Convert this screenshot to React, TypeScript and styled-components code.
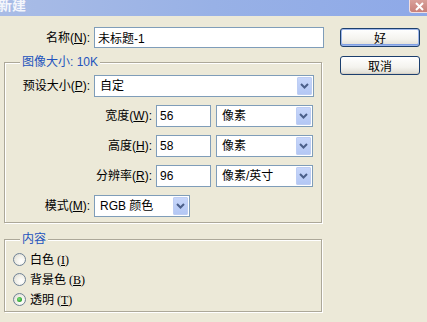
import React from "react";
import styled, { createGlobalStyle } from "styled-components";

const Global = createGlobalStyle`
  html, body { margin: 0; padding: 0; background: #ece9d8; }
  body {
    width: 427px; height: 322px; overflow: hidden;
    font-family: "Liberation Sans", "Noto Sans CJK SC", sans-serif;
    font-size: 12px; color: #000;
  }
`;

const Window = styled.div`
  width: 427px;
  height: 322px;
  background: #ece9d8;
  overflow: hidden;
  display: flex;
  flex-direction: column;
`;

const TitleBar = styled.div`
  height: 16px;
  flex: none;
  display: flex;
  justify-content: space-between;
  align-items: flex-start;
  overflow: hidden;
  background: linear-gradient(to right, #a9bce6 0%, #98b1e6 50%, #8ea9e8 100%);
`;

const Title = styled.div`
  font-family: "Noto Sans CJK SC", sans-serif;
  font-weight: bold;
  font-size: 14px;
  line-height: 14px;
  color: #f4f6fc;
  margin: -3px 0 0 -2px;
`;

const CloseButton = styled.div`
  width: 20px;
  height: 13px;
  margin-right: -2px;
  box-sizing: border-box;
  background: linear-gradient(180deg, #d9a09a 0%, #c98079 100%);
  border-left: 1px solid #f3dede;
  border-bottom: 1px solid #f3dede;
  border-radius: 0 0 0 3px;
  display: flex;
  align-items: center;
  justify-content: center;
`;

const Body = styled.div`
  display: flex;
  gap: 16px;
  padding: 11px 0 0 4px;
`;

const LeftColumn = styled.div`
  width: 320px;
  display: flex;
  flex-direction: column;
`;

const RightColumn = styled.div`
  display: flex;
  flex-direction: column;
  gap: 9px;
  padding-top: 1px;
`;

const Row = styled.div`
  display: flex;
  align-items: center;
  gap: 4px;
`;

const Label = styled.div<{ $w: number }>`
  width: ${(p) => p.$w}px;
  flex: none;
  text-align: right;
  white-space: nowrap;
  line-height: 14px;
`;

const TextBox = styled.input<{ $w: number; $h?: number }>`
  width: ${(p) => p.$w}px;
  height: ${(p) => p.$h ?? 22}px;
  box-sizing: border-box;
  border: 1px solid #7f9db9;
  background: #fff;
  font-family: "Liberation Sans", "Noto Sans CJK SC", sans-serif;
  font-size: 12px;
  color: #000;
  padding: 0 3px;
  margin: 0;
  outline: none;
`;

const Combo = styled.div<{ $w: number; $ml?: number }>`
  width: ${(p) => p.$w}px;
  height: 22px;
  margin-left: ${(p) => p.$ml ?? 0}px;
  box-sizing: border-box;
  border: 1px solid #7f9db9;
  background: #fff;
  display: flex;
  align-items: center;
  padding: 1px 1px 1px 5px;
`;

const ComboText = styled.div`
  flex: 1;
  white-space: nowrap;
  line-height: 14px;
`;

const ComboButton = styled.div`
  width: 15px;
  height: 18px;
  box-sizing: border-box;
  background: linear-gradient(180deg, #c7d6fa 0%, #b3c7f4 100%);
  border: 1px solid #bdcdf3;
  border-radius: 1px;
  display: flex;
  align-items: center;
  justify-content: center;
`;

const Group = styled.div<{ $pt: number; $pb: number; $pl: number; $gap: number; $mt: number }>`
  position: relative;
  width: 318px;
  box-sizing: border-box;
  margin-top: ${(p) => p.$mt}px;
  border: 1px solid #aca899;
  box-shadow: inset 1px 1px 0 #fff, 1px 1px 0 #fff;
  padding: ${(p) => p.$pt}px 0 ${(p) => p.$pb}px ${(p) => p.$pl}px;
  display: flex;
  flex-direction: column;
  gap: ${(p) => p.$gap}px;
`;

const Legend = styled.div`
  position: absolute;
  top: -8px;
  left: 15px;
  padding: 0 2px;
  background: #ece9d8;
  color: #2353bd;
  line-height: 14px;
  white-space: nowrap;
`;

const Button = styled.div<{ $default?: boolean }>`
  width: 80px;
  height: 19px;
  box-sizing: border-box;
  border: 1px solid #1c3f6e;
  border-radius: 3px;
  background: linear-gradient(180deg, #ffffff 0%, #f4f3ee 60%, #dedcd2 100%);
  box-shadow: ${(p) =>
    p.$default ? "inset 0 0 0 1px #9db6ea, inset 0 -1px 0 1px #7f9fe4" : "inset 0 -1px 0 #d6d0c5"};
  display: flex;
  align-items: center;
  justify-content: center;
  font-family: "Noto Sans CJK SC", sans-serif;
  font-size: 12px;
  line-height: 14px;
`;

const RadioRow = styled.div`
  height: 20px;
  display: flex;
  align-items: center;
  gap: 4px;
`;

const RadioCircle = styled.div<{ $checked?: boolean }>`
  width: 13px;
  height: 13px;
  box-sizing: border-box;
  border-radius: 50%;
  border: 1px solid #6f8296;
  background: radial-gradient(circle at 65% 65%, #ffffff 0%, #f2f1ea 45%, #d8d6cc 100%);
  display: flex;
  align-items: center;
  justify-content: center;
  &::after {
    content: "";
    display: ${(p) => (p.$checked ? "block" : "none")};
    width: 5px;
    height: 5px;
    border-radius: 50%;
    background: radial-gradient(circle at 40% 40%, #7fe07f 0%, #2aa12a 70%);
  }
`;

const RadioText = styled.div`
  line-height: 14px;
  font-family: "Noto Sans CJK SC", sans-serif;
  white-space: nowrap;
`;

const Mnemonic = styled.span`
  font-family: "Liberation Serif", serif;
  font-size: 12px;
  margin-left: 3px;
`;

const Chevron = () => (
  <svg width="9" height="6" viewBox="0 0 9 6">
    <polyline points="1,1 4.5,4.5 8,1" fill="none" stroke="#4b5f8a" strokeWidth="2" />
  </svg>
);

const CloseX = () => (
  <svg width="9" height="9" viewBox="0 0 9 9">
    <path d="M1 1 L8 8 M8 1 L1 8" stroke="#fff" strokeWidth="2" />
  </svg>
);

const Select = ({ w, text, ml }: { w: number; text: string; ml?: number }) => (
  <Combo $w={w} $ml={ml}>
    <ComboText>{text}</ComboText>
    <ComboButton>
      <Chevron />
    </ComboButton>
  </Combo>
);

const Key = ({ k }: { k: string }) => (
  <>
    (<u>{k}</u>):
  </>
);

export default function App() {
  return (
    <Window>
      <Global />
      <TitleBar>
        <Title>新建</Title>
        <CloseButton>
          <CloseX />
        </CloseButton>
      </TitleBar>
      <Body>
        <LeftColumn>
          <Row>
            <Label $w={86}>
              名称<Key k="N" />
            </Label>
            <TextBox $w={230} $h={21} readOnly value="未标题-1" />
          </Row>

          <Group $mt={14} $pt={12} $pb={5} $pl={0} $gap={8}>
            <Legend>图像大小: 10K</Legend>
            <Row>
              <Label $w={85}>
                预设大小<Key k="P" />
              </Label>
              <Select w={220} text="自定" />
            </Row>
            <Row>
              <Label $w={147}>
                宽度<Key k="W" />
              </Label>
              <TextBox $w={55} readOnly value="56" />
              <Select w={97} text="像素" ml={1} />
            </Row>
            <Row>
              <Label $w={147}>
                高度<Key k="H" />
              </Label>
              <TextBox $w={55} readOnly value="58" />
              <Select w={97} text="像素" ml={1} />
            </Row>
            <Row>
              <Label $w={147}>
                分辨率<Key k="R" />
              </Label>
              <TextBox $w={55} readOnly value="96" />
              <Select w={97} text="像素/英寸" ml={1} />
            </Row>
            <Row>
              <Label $w={85}>
                模式<Key k="M" />
              </Label>
              <Select w={96} text="RGB 颜色" />
            </Row>
          </Group>

          <Group $mt={16} $pt={9} $pb={2} $pl={8} $gap={0}>
            <Legend>内容</Legend>
            <RadioRow>
              <RadioCircle />
              <RadioText>
                白色<Mnemonic>(<u>I</u>)</Mnemonic>
              </RadioText>
            </RadioRow>
            <RadioRow>
              <RadioCircle />
              <RadioText>
                背景色<Mnemonic>(<u>B</u>)</Mnemonic>
              </RadioText>
            </RadioRow>
            <RadioRow>
              <RadioCircle $checked />
              <RadioText>
                透明<Mnemonic>(<u>T</u>)</Mnemonic>
              </RadioText>
            </RadioRow>
          </Group>
        </LeftColumn>
        <RightColumn>
          <Button $default>好</Button>
          <Button>取消</Button>
        </RightColumn>
      </Body>
    </Window>
  );
}
